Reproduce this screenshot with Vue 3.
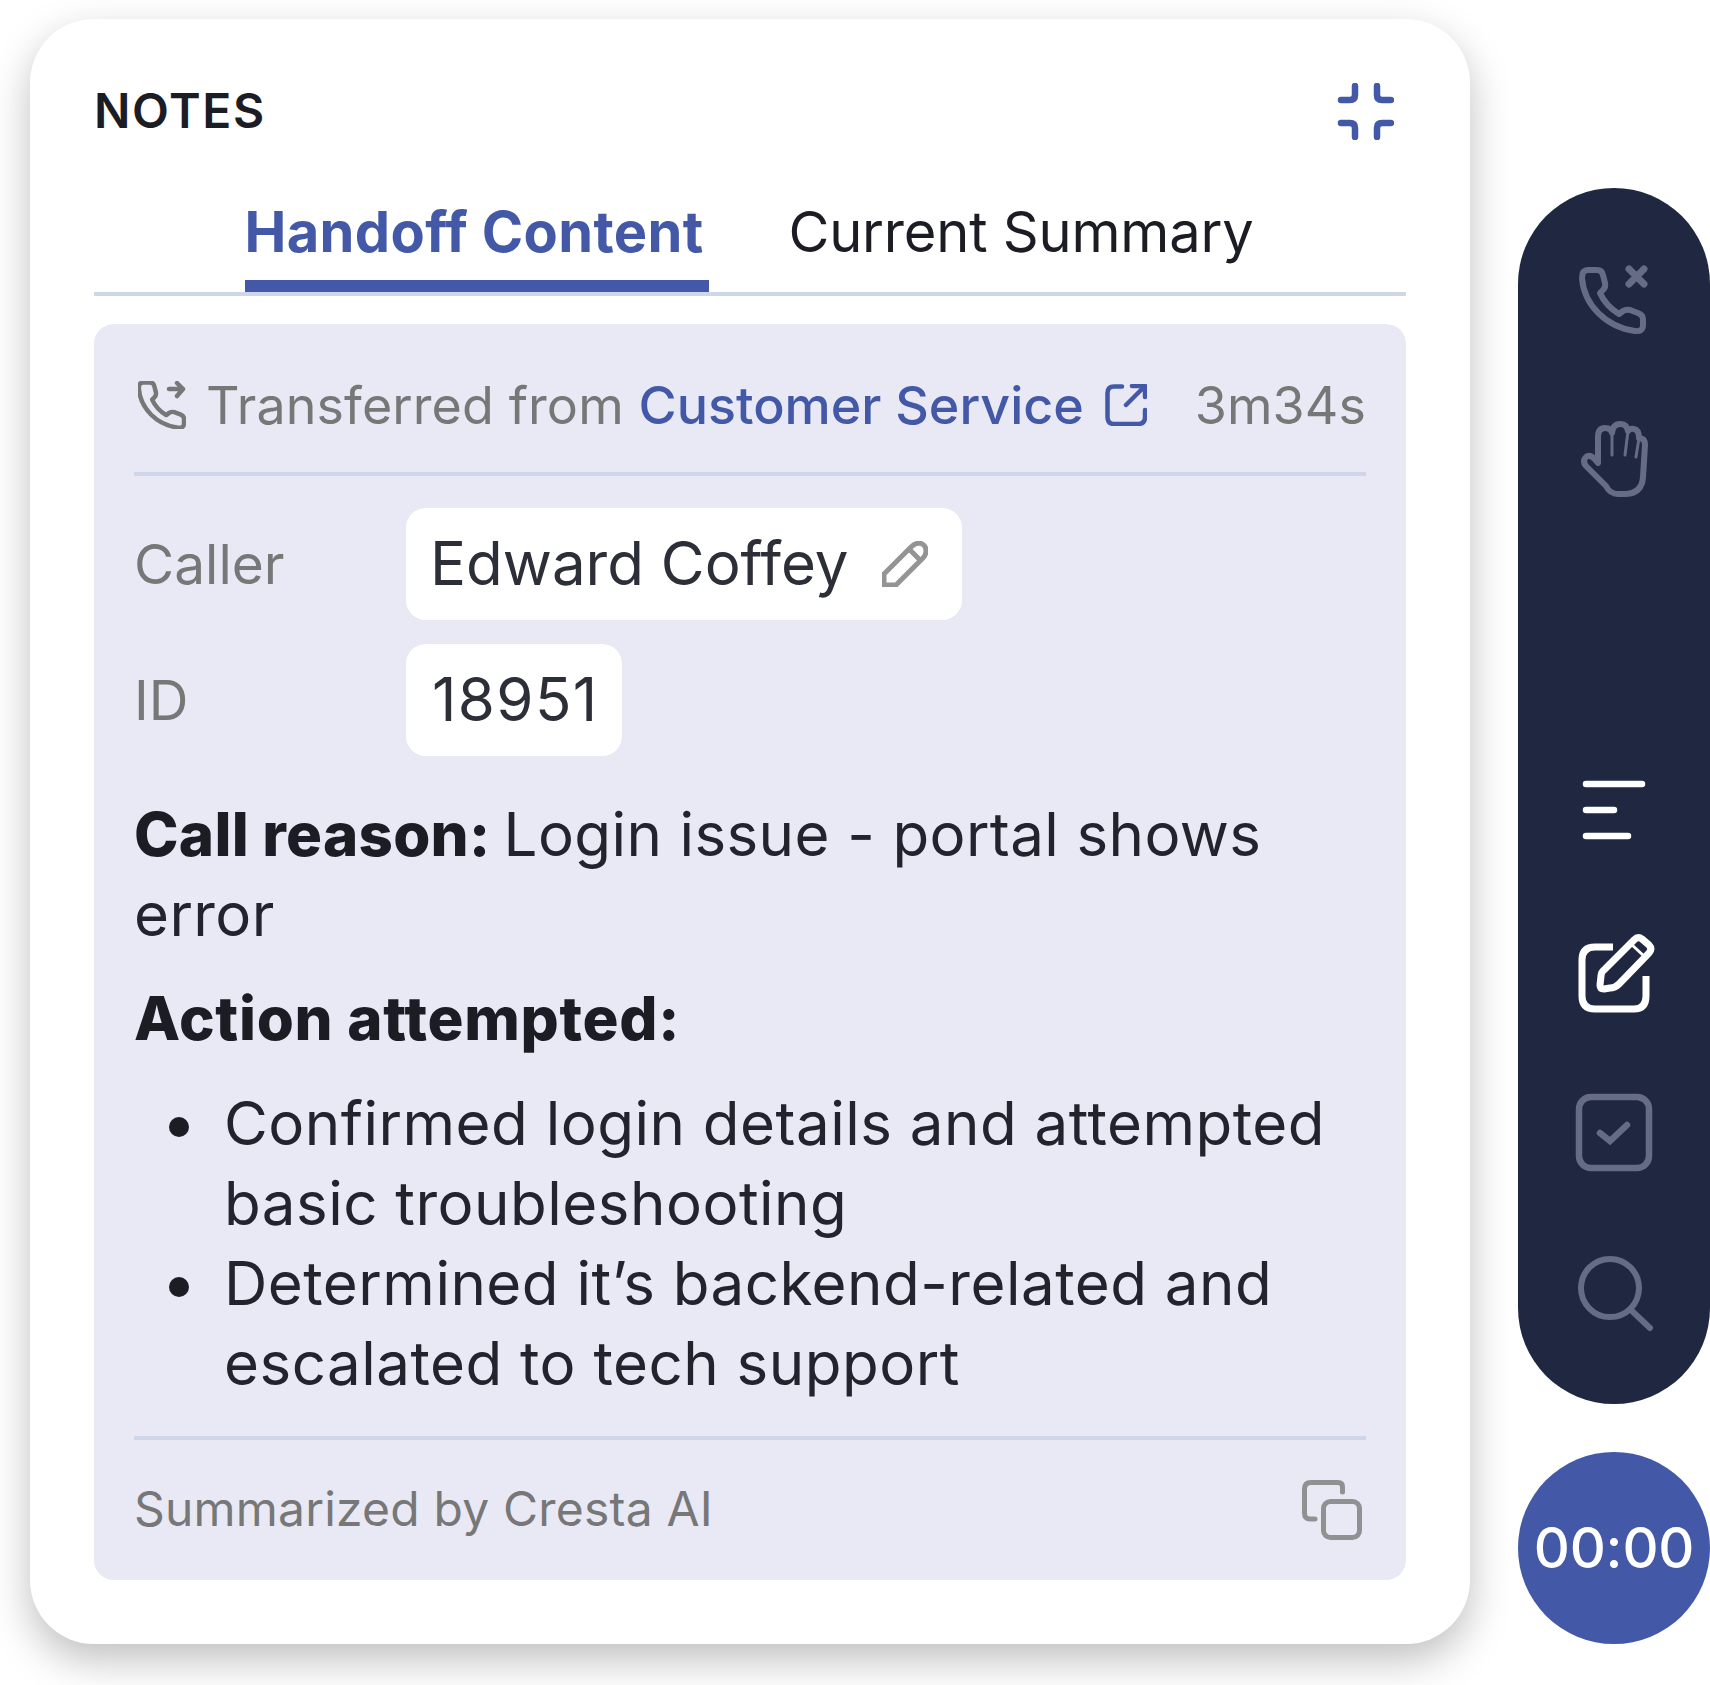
<template>
  <div class="page">
    <section class="card">
      <header class="card-head">
        <h2 class="title">NOTES</h2>
        <svg class="collapse" viewBox="0 0 57 57" fill="none" stroke="#4359a8" stroke-width="6.5" stroke-linecap="round">
          <path d="M18 3V12Q18 17 13 17H4" />
          <path d="M40 3V12Q40 17 45 17H54" />
          <path d="M4 40H13Q18 40 18 45V54" />
          <path d="M54 40H45Q40 40 40 45V54" />
        </svg>
      </header>

      <nav class="tabs">
        <div class="tab active">Handoff Content</div>
        <div class="tab">Current Summary</div>
      </nav>

      <div class="panel">
        <div class="transfer">
          <svg class="transfer-icon" viewBox="0 0 48 48" fill="none" stroke="#777" stroke-width="4.5" stroke-linecap="round" stroke-linejoin="round">
            <g transform="translate(-12.5 -14) scale(.74)">
              <path stroke-width="6" :d="phonePath" />
            </g>
            <path d="M31 8H45M39 2L45 8L39 15" />
          </svg>
          <span class="transfer-text">Transferred from <span class="link">Customer Service</span></span>
          <svg class="link-icon" viewBox="0 0 42 42" fill="none" stroke="#4359a8" stroke-width="4.5" stroke-linecap="round" stroke-linejoin="round">
            <path d="M17 2.5H9Q2.5 2.5 2.5 9V33Q2.5 40 9 40H33Q40 40 40 33V26" />
            <path d="M21 21L39 3M27 2H40V13" />
          </svg>
          <span class="duration">3m34s</span>
        </div>

        <div class="fields">
          <div class="field">
            <span class="label">Caller</span>
            <div class="value">
              Edward Coffey
              <svg class="pencil" viewBox="0 0 46 46" fill="none" stroke="#949494" stroke-width="5" stroke-linejoin="round">
                <path d="M2 33L29 6Q33 2 38 2Q44 4 44 10Q44 14 41 17L14 44H2Z" />
                <path d="M27 8L38 19" />
              </svg>
            </div>
          </div>
          <div class="field">
            <span class="label">ID</span>
            <div class="value id">18951</div>
          </div>
        </div>

        <div class="notes">
          <p class="reason"><b>Call reason:</b> Login issue - portal shows error</p>
          <p class="action"><b>Action attempted:</b></p>
          <ul>
            <li v-for="item in attempts" :key="item">{{ item }}</li>
          </ul>
        </div>

        <footer class="panel-foot">
          <span class="credit">Summarized by Cresta AI</span>
          <svg class="copy" viewBox="0 0 60 60" fill="none" stroke="#919191" stroke-width="5" stroke-linecap="round">
            <rect x="21.5" y="21.5" width="36" height="36" rx="7" />
            <path d="M40.5 12V7Q40.5 2.5 36 2.5H9Q2.5 2.5 2.5 9V33Q2.5 39 8 39H13" />
          </svg>
        </footer>
      </div>
    </section>

    <aside class="side">
      <div class="rail">
        <div class="rail-group">
          <div class="slot">
            <svg viewBox="0 0 100 100" fill="none" stroke="#666c85" stroke-width="6" stroke-linecap="round" stroke-linejoin="round">
              <path :d="phonePath" />
              <path stroke-width="7" d="M65 20L80 35M80 20L65 35" />
            </svg>
          </div>
          <div class="slot">
            <svg viewBox="0 0 100 100" fill="none" stroke="#666c85" stroke-width="6" stroke-linecap="round" stroke-linejoin="round">
              <path d="M34 54V28Q34 19 41 19Q47 19 48 24Q49 15 56 15Q63 15 64 22Q66 19 70 20Q75 21 75 29Q81 29 81 36L79 68Q78 84 62 85H54Q46 85 42 77L22 57Q18 52 22 48Q27 44 34 54Z" />
              <path stroke-width="3" d="M48 24V46M64 22L61 46M75 29L72 48" />
            </svg>
          </div>
        </div>
        <div class="rail-group">
          <div class="slot">
            <svg viewBox="0 0 100 100" fill="none" stroke="#fff" stroke-width="6.5" stroke-linecap="round">
              <path d="M22 21H78M22 47H50M22 73H64" />
            </svg>
          </div>
          <div class="slot">
            <svg viewBox="0 0 100 100" fill="none" stroke="#fff" stroke-width="7" stroke-linejoin="round">
              <path d="M49 24H31Q18 24 18 37V73Q18 86 31 86H70Q82 86 82 73V53" />
              <path d="M70 17Q74 13 78 16L85 22Q89 26 85 30L55 61Q51 65 46 65L40 66Q36 66 36 62L37 53Q37 49 41 46Z" />
              <path stroke-width="3" d="M67 21L81 34" />
            </svg>
          </div>
          <div class="slot">
            <svg viewBox="0 0 100 100" fill="none" stroke="#666c85" stroke-width="6.5" stroke-linecap="round">
              <rect x="15" y="14" width="70" height="71" rx="12" />
              <path d="M36 50L46 58L63 42" />
            </svg>
          </div>
          <div class="slot">
            <svg viewBox="0 0 100 100" fill="none" stroke="#666c85" stroke-width="6" stroke-linecap="round">
              <circle cx="46" cy="45" r="29" />
              <path d="M68 68L86 85" />
            </svg>
          </div>
        </div>
      </div>
      <div class="timer">00:00</div>
    </aside>
  </div>
</template>

<script setup>
const phonePath =
  "M24 21H33Q38 21 39 26L41 34Q42 38 39 41L36 44C40 53 47 60 55 65L59 62Q62 60 66 61L74 64Q79 66 79 70V76Q79 83 71 82C42 78 20 56 18 29Q18 21 24 21Z";

const attempts = [
  "Confirmed login details and attempted basic troubleshooting",
  "Determined it’s backend-related and escalated to tech support",
];
</script>

<style>
html,
body {
  margin: 0;
  background: #fff;
}
</style>

<style scoped>
.page {
  display: flex;
  align-items: flex-start;
  height: 1685px;
  box-sizing: border-box;
  padding: 19px 0 0 30px;
  font-family: Inter, "Liberation Sans", sans-serif;
  overflow: hidden;
}
.card {
  width: 1440px;
  height: 1625px;
  box-sizing: border-box;
  padding: 64px;
  flex-shrink: 0;
  background: #fff;
  border-radius: 64px;
  box-shadow: 0 16px 40px rgba(0, 0, 0, 0.25);
}
.card-head {
  display: flex;
  justify-content: space-between;
  align-items: center;
  height: 57px;
  padding-right: 12px;
}
.title {
  margin: 0 0 2px;
  font-size: 48px;
  font-weight: 600;
  letter-spacing: 1.6px;
  color: #1b1c24;
}
.collapse {
  width: 57px;
  height: 57px;
}
.tabs {
  display: flex;
  justify-content: center;
  gap: 79px;
  height: 99px;
  padding: 53px 2px 0 0;
  box-shadow: 0 4px 0 #d0d6ea;
}
.tab {
  font-size: 56px;
  line-height: 78px;
  height: 99px;
  letter-spacing: -0.2px;
  color: #1b1c24;
}
.tab.active {
  box-sizing: border-box;
  padding-right: 6px;
  font-weight: 700;
  letter-spacing: 0.35px;
  color: #4359a8;
  border-bottom: 12px solid #4359a8;
}
.panel {
  margin-top: 32px;
  height: 1256px;
  box-sizing: border-box;
  padding: 0 40px;
  background: #e9e9f5;
  border-radius: 20px;
}
.transfer {
  display: flex;
  align-items: center;
  height: 152px;
  padding-top: 14px;
  box-sizing: border-box;
  border-bottom: 4px solid #d0d6ea;
  font-size: 52px;
  letter-spacing: 0.1px;
  color: #777;
}
.transfer-icon {
  width: 48px;
  height: 48px;
  margin: 0 20px 0 4px;
  flex-shrink: 0;
}
.link {
  font-weight: 500;
  letter-spacing: 0;
  color: #4359a8;
}
.link-icon {
  width: 42px;
  height: 42px;
  margin-left: 21px;
  flex-shrink: 0;
}
.duration {
  margin-left: auto;
}
.fields {
  display: flex;
  flex-direction: column;
  gap: 24px;
  margin-top: 32px;
}
.field {
  display: flex;
  align-items: center;
}
.label {
  width: 272px;
  font-size: 55px;
  color: #777;
}
.value {
  display: flex;
  align-items: center;
  gap: 34px;
  height: 112px;
  box-sizing: border-box;
  padding: 0 34px 2px 24px;
  background: #fff;
  border-radius: 20px;
  font-size: 60px;
  color: #2c2e38;
}
.value.id {
  padding-left: 26px;
  padding-right: 23px;
  letter-spacing: 1.4px;
}
.pencil {
  width: 46px;
  height: 46px;
  margin-top: 2px;
}
.notes {
  margin-top: 38px;
  font-size: 60px;
  line-height: 80px;
  letter-spacing: 0.5px;
  color: #22232c;
}
.notes p {
  margin: 0;
}
.notes b {
  font-weight: 800;
  color: #1b1c24;
}
.notes .reason {
  letter-spacing: 0.4px;
}
.notes .reason b {
  margin-right: -4px;
  letter-spacing: 0.25px;
}
.notes .action {
  margin-top: 24px;
}
.notes .action b {
  letter-spacing: 0.7px;
}
.notes ul {
  margin: 25px 0 0;
  padding-left: 90px;
  list-style: none;
}
.notes li {
  position: relative;
}
.notes li::before {
  content: "";
  position: absolute;
  left: -55px;
  top: 34px;
  width: 20px;
  height: 20px;
  border-radius: 50%;
  background: #1b1c24;
}
.panel-foot {
  display: flex;
  justify-content: space-between;
  align-items: center;
  margin-top: 33px;
  padding: 40px 4px 40px 0;
  border-top: 4px solid #d0d6ea;
  font-size: 48px;
  letter-spacing: 0.2px;
  color: #777;
}
.credit {
  line-height: 48px;
  margin-bottom: 2px;
}
.copy {
  width: 60px;
  height: 60px;
}
.side {
  display: flex;
  flex-direction: column;
  gap: 48px;
  width: 192px;
  flex-shrink: 0;
  margin: 169px 0 0 48px;
}
.rail {
  display: flex;
  flex-direction: column;
  justify-content: space-between;
  height: 1216px;
  box-sizing: border-box;
  padding: 31px 0;
  background: #1f2840;
  border-radius: 96px;
}
.slot {
  display: flex;
  justify-content: center;
  align-items: center;
  height: 160px;
}
.slot svg {
  width: 100px;
  height: 100px;
}
.timer {
  display: flex;
  justify-content: center;
  align-items: center;
  width: 192px;
  height: 192px;
  border-radius: 50%;
  background: #4359a8;
  color: #fff;
  font-size: 56px;
  font-weight: 500;
  letter-spacing: -0.2px;
}
</style>
